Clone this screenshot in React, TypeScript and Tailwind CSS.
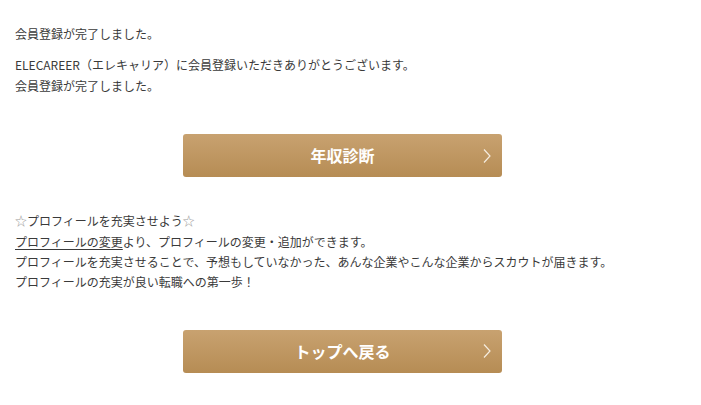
function GoldButton({ label }: { label: string }) {
  return (
    <a className="relative mx-auto flex h-[43px] w-[319px] items-center justify-center rounded-[3px] bg-gradient-to-b from-[#c8a270] to-[#b68c54] text-[16px] font-bold text-white">
      {label}
      <svg
        width="8"
        height="15"
        viewBox="0 0 8 15"
        className="absolute right-[11px] top-1/2 -translate-y-1/2"
      >
        <polyline
          points="1,1 7,7.5 1,14"
          fill="none"
          stroke="#f5ecdf"
          strokeWidth="1.2"
        />
      </svg>
    </a>
  );
}

export default function App() {
  return (
    <div
      className="w-[685px] bg-white px-[15px] pt-[24px] pb-[30px] text-[12px] leading-[1.7] text-[#3a3a3a]"
      style={{ fontFamily: '"Noto Sans CJK JP", "Noto Sans", sans-serif' }}
    >
      <p>会員登録が完了しました。</p>
      <p className="mt-[11px]">
        ELECAREER（エレキャリア）に会員登録いただきありがとうございます。
        <br />
        会員登録が完了しました。
      </p>

      <div className="mt-[38px]">
        <GoldButton label="年収診断" />
      </div>

      <p className="mt-[34px]">
        <span className="text-[#999999]">☆</span>プロフィールを充実させよう
        <span className="text-[#999999]">☆</span>
        <br />
        <a className="underline underline-offset-2">プロフィールの変更</a>
        より、プロフィールの変更・追加ができます。
        <br />
        プロフィールを充実させることで、予想もしていなかった、あんな企業やこんな企業からスカウトが届きます。
        <br />
        プロフィールの充実が良い転職への第一歩！
      </p>

      <div className="mt-[37px]">
        <GoldButton label="トップへ戻る" />
      </div>
    </div>
  );
}
